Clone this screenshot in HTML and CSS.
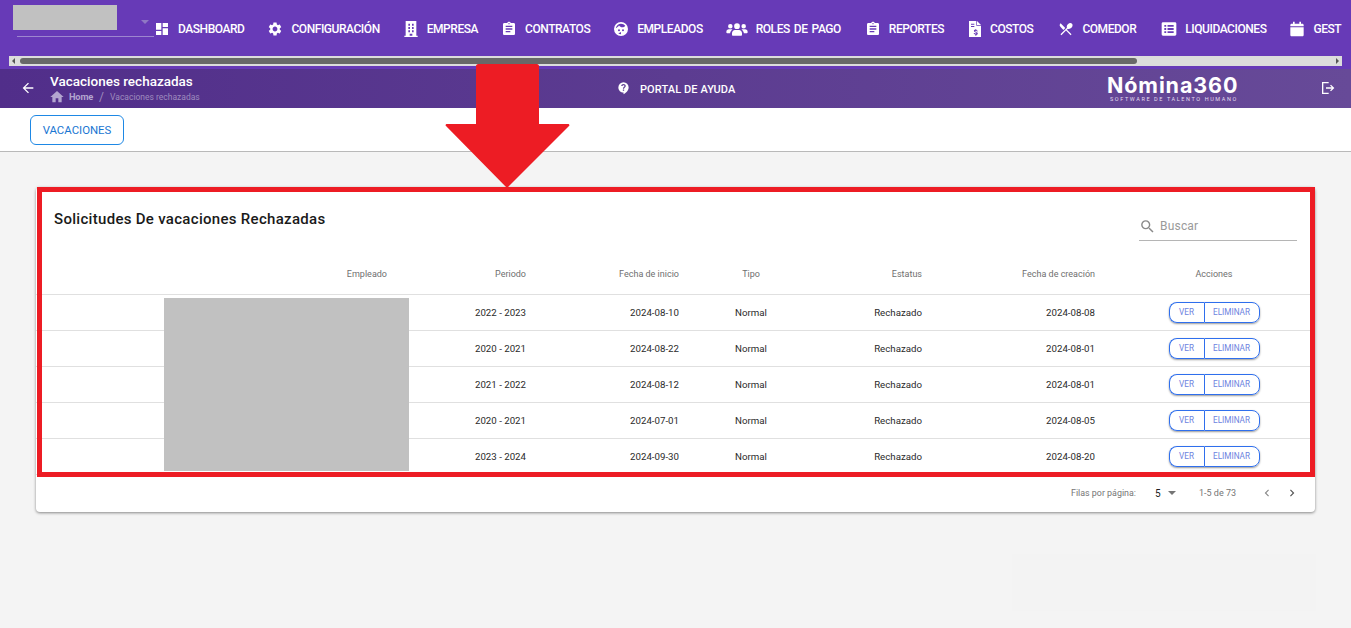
FILE: index.html
```html
<!DOCTYPE html>
<html lang="es">

<head>
  <meta charset="utf-8">
  <title>Vacaciones rechazadas</title>
  <link rel="stylesheet" href="styles.css">
</head>

<body>
  <header class="topbar">
    <div class="menu">
      <div class="company-select">
        <span class="select-arrow"></span>
      </div>
      <nav class="nav">
        <a class="nav-item"><svg class="nav-icon" viewBox="0 0 24 24"><path d="M3 13h8V3H3v10zm0 8h8v-6H3v6zm10 0h8V11h-8v10zm0-18v6h8V3h-8z"/></svg>DASHBOARD</a>
        <a class="nav-item"><svg class="nav-icon" viewBox="0 0 24 24"><path d="M19.14 12.94c.04-.3.06-.61.06-.94 0-.32-.02-.64-.07-.94l2.03-1.58c.18-.14.23-.41.12-.61l-1.92-3.32c-.12-.22-.37-.29-.59-.22l-2.39.96c-.5-.38-1.03-.7-1.62-.94l-.36-2.54c-.04-.24-.24-.41-.48-.41h-3.84c-.24 0-.43.17-.47.41l-.36 2.54c-.59.24-1.13.57-1.62.94l-2.39-.96c-.22-.08-.47 0-.59.22L2.74 8.87c-.12.21-.08.47.12.61l2.03 1.58c-.05.3-.09.63-.09.94s.02.64.07.94l-2.03 1.58c-.18.14-.23.41-.12.61l1.92 3.32c.12.22.37.29.59.22l2.39-.96c.5.38 1.03.7 1.62.94l.36 2.54c.05.24.24.41.48.41h3.84c.24 0 .44-.17.47-.41l.36-2.54c.59-.24 1.13-.56 1.62-.94l2.39.96c.22.08.47 0 .59-.22l1.92-3.32c.12-.22.07-.47-.12-.61l-2.01-1.58zM12 15.6c-1.98 0-3.6-1.62-3.6-3.6s1.62-3.6 3.6-3.6 3.6 1.62 3.6 3.6-1.62 3.6-3.6 3.6z"/></svg>CONFIGURACIÓN</a>
        <a class="nav-item"><svg class="nav-icon" viewBox="0 0 24 24"><path fill-rule="evenodd" d="M4 0h16v22h2v2H2v-2h2V0zm4 4v3h2.500V4H8zm5.500 0v3H16V4h-2.500zM8 9v3h2.500V9H8zm5.500 0v3H16V9h-2.500zM8 14v3h2.500v-3H8zm5.500 0v3H16v-3h-2.500zM10 19v3h4v-3h-4z"/></svg>EMPRESA</a>
        <a class="nav-item"><svg class="nav-icon" viewBox="0 0 24 24"><path d="M19 3h-4.18C14.4 1.84 13.3 1 12 1c-1.3 0-2.4.84-2.82 2H5c-1.1 0-2 .9-2 2v14c0 1.1.9 2 2 2h14c1.1 0 2-.9 2-2V5c0-1.1-.9-2-2-2zm-7 0c.55 0 1 .45 1 1s-.45 1-1 1-1-.45-1-1 .45-1 1-1zm2 14H7v-2h7v2zm3-4H7v-2h10v2zm0-4H7V7h10v2z"/></svg>CONTRATOS</a>
        <a class="nav-item"><svg class="nav-icon" viewBox="0 0 24 24"><path fill-rule="evenodd" d="M12 1.500a10.500 10.500 0 1 0 0 21 10.500 10.500 0 0 0 0-21zM12 4c2.600 0 4.900 1.300 6.400 3.200-1 1.500-2.700 2.300-4.400 2.300-2 0-3.800-1-5-2.700C7.600 8.800 6 10 4.200 10.700 5 7 8.100 4 12 4zM9 12.500a1.500 1.500 0 1 1 0 3 1.500 1.500 0 0 1 0-3zm6 0a1.500 1.500 0 1 1 0 3 1.500 1.500 0 0 1 0-3zM12 20c-1.500 0-3-.4-4.200-1.200l4.200-2.300V20z"/></svg>EMPLEADOS</a>
        <a class="nav-item"><svg class="nav-icon nav-icon-wide" viewBox="0 0 32 24"><path d="M16 3.500a4.300 4.300 0 1 1 0 8.600 4.300 4.300 0 0 1 0-8.600zM6 4.500a3.400 3.400 0 1 1 0 6.800 3.400 3.400 0 0 1 0-6.800zm20 0a3.400 3.400 0 1 1 0 6.800 3.400 3.400 0 0 1 0-6.800zM10 22c-.8 0-1.500-.6-1.500-1.500v-2c0-2.800 2-5 4.500-5h6c2.500 0 4.500 2.200 4.500 5v2c0 .9-.7 1.500-1.500 1.500H10zM0 16.500c0-2.500 1.700-4 3.800-4h3.400c.8 0 1.500.2 2 .7-2 1-3.400 2.900-3.500 5.300H2c-1 0-2-.8-2-1.800v-.2zm32 0c0-2.500-1.700-4-3.800-4h-3.400c-.8 0-1.500.2-2 .7 2 1 3.400 2.900 3.500 5.300H30c1 0 2-.8 2-1.800v-.2z"/></svg>ROLES DE PAGO</a>
        <a class="nav-item nav-item-near"><svg class="nav-icon" viewBox="0 0 24 24"><path d="M19 3h-4.18C14.4 1.84 13.3 1 12 1c-1.3 0-2.4.84-2.82 2H5c-1.1 0-2 .9-2 2v14c0 1.1.9 2 2 2h14c1.1 0 2-.9 2-2V5c0-1.1-.9-2-2-2zm-7 0c.55 0 1 .45 1 1s-.45 1-1 1-1-.45-1-1 .45-1 1-1zm2 14H7v-2h7v2zm3-4H7v-2h10v2zm0-4H7V7h10v2z"/></svg>REPORTES</a>
        <a class="nav-item nav-item-far"><svg class="nav-icon nav-icon-narrow" viewBox="0 0 18 24"><path fill-rule="evenodd" d="M0 0h11v7h7v17H0V0zm12 0 6 6h-6V0zM3 4v1.500h5V4H3zm0 3.500V9h5V7.500H3zm6.500 4v1.100c-1.300.2-2.200 1.100-2.200 2.200 0 1.400 1.200 1.900 2.500 2.300 1 .3 1.400.5 1.400 1 0 .4-.5.8-1.300.8-.9 0-1.300-.4-1.400-1H7c.1 1.200 1 2 2.500 2.200V22H11v-1c1.300-.2 2.200-1 2.200-2.200 0-1.500-1.200-2-2.600-2.400-1-.3-1.300-.5-1.300-.9s.4-.8 1.100-.8c.8 0 1.100.4 1.200.9h1.500c-.1-1.100-.8-1.900-2.100-2.100v-1H9.500z"/></svg>COSTOS</a>
        <a class="nav-item nav-item-far"><svg class="nav-icon" viewBox="0 0 24 24"><path d="M8.100 13.340l2.830-2.830L3.910 3.500a4 4 0 0 0 0 5.660l4.190 4.180zm6.780-1.810c1.530.71 3.680.21 5.270-1.380 1.910-1.910 2.280-4.650.81-6.120-1.460-1.460-4.200-1.100-6.120.81-1.590 1.590-2.090 3.740-1.380 5.270L3.700 19.870l1.410 1.410L12 14.410l6.880 6.880 1.410-1.410L13.410 13l1.470-1.470z"/></svg>COMEDOR</a>
        <a class="nav-item nav-item-far"><svg class="nav-icon" viewBox="0 0 24 24"><path fill-rule="evenodd" d="M3 2h18c1.100 0 2 .9 2 2v16c0 1.100-.9 2-2 2H3c-1.100 0-2-.9-2-2V4c0-1.100.9-2 2-2zm2 4v2.800h2.800V6H5zm4.800 0v2.800H19V6H9.800zM5 10.600v2.800h2.800v-2.800H5zm4.800 0v2.800H19v-2.800H9.800zM5 15.200V18h2.800v-2.800H5zm4.800 0V18H19v-2.800H9.800z"/></svg>LIQUIDACIONES</a>
        <a class="nav-item"><svg class="nav-icon" viewBox="0 0 24 24"><path d="M6 1h2.500v3h7V1H18v3h2c1.100 0 2 .9 2 2v2H2V6c0-1.100.9-2 2-2h2V1zM2 9.500h20V21c0 1.100-.9 2-2 2H4c-1.100 0-2-.9-2-2V9.500z"/></svg>GEST</a>
      </nav>
    </div>
    <div class="scrollbar">
      <span class="scroll-arrow scroll-left"></span>
      <span class="scroll-thumb"></span>
      <span class="scroll-arrow scroll-right"></span>
    </div>
  </header>

  <div class="subheader">
    <div class="page-title">
      <svg class="back-icon" viewBox="0 0 24 24"><path d="M20 11H7.830l5.590-5.590L12 4l-8 8 8 8 1.410-1.410L7.830 13H20v-2z"/></svg>
      <div>
        <h1 class="title">Vacaciones rechazadas</h1>
        <div class="crumbs">
          <svg class="home-icon" viewBox="0 0 24 24"><path d="M10 20v-6h4v6h5v-8h3L12 3 2 12h3v8z"/></svg>
          <b>Home</b><i>/</i><span>Vacaciones rechazadas</span>
        </div>
      </div>
    </div>
    <a class="help">
      <svg class="help-icon" viewBox="0 0 24 24"><path fill-rule="evenodd" d="M12 1.500a9.500 9.500 0 0 0-9.500 9.500c0 5.200 4.300 9.500 9.500 9.500v3c5-2.400 9.500-7.300 9.500-12.500A9.500 9.500 0 0 0 12 1.500zm-1.200 15.800v-2.400h2.400v2.400h-2.400zm2.300-4h-2.200c0-3.300 3-3.100 3-5 0-.9-.8-1.600-1.900-1.600s-1.900.7-1.900 1.700H7.800c0-2.300 1.900-3.800 4.200-3.800s4.200 1.500 4.200 3.700c0 2.600-3.100 2.900-3.100 5z"/></svg>
      PORTAL DE AYUDA
    </a>
    <div class="logo">
      <div class="logo-name">Nómina360</div>
      <div class="logo-tag">SOFTWARE DE TALENTO HUMANO</div>
    </div>
    <svg class="logout-icon" viewBox="0 0 24 24"><path d="M3 3h10v2H5v14h8v2H3V3zm13.500 4 5 5-5 5-1.400-1.400 2.600-2.600H9v-2h8.700l-2.600-2.600L16.500 7z"/></svg>
  </div>

  <div class="tabs">
    <button class="tab-button">VACACIONES</button>
  </div>

  <main class="content">
    <section class="card">
      <div class="card-head">
        <h2 class="card-title">Solicitudes De vacaciones Rechazadas</h2>
        <label class="search">
          <svg class="search-icon" viewBox="0 0 24 24"><path d="M15.500 14h-.79l-.28-.27A6.470 6.470 0 0 0 16 9.500 6.500 6.500 0 1 0 9.500 16c1.610 0 3.090-.59 4.230-1.570l.27.28v.79l5 4.990L20.490 19l-4.990-5zm-6 0C7.010 14 5 11.990 5 9.500S7.010 5 9.500 5 14 7.010 14 9.500 11.990 14 9.500 14z"/></svg>
          Buscar
        </label>
      </div>
      <table class="grid">
        <colgroup>
          <col class="col-empleado"><col class="col-periodo"><col class="col-inicio"><col class="col-tipo"><col class="col-estatus"><col class="col-creacion"><col class="col-acciones">
        </colgroup>
        <thead>
          <tr>
            <th>Empleado</th><th>Periodo</th><th>Fecha de inicio</th><th class="center">Tipo</th><th>Estatus</th><th>Fecha de creación</th><th class="center last">Acciones</th>
          </tr>
        </thead>
        <tbody>
          <tr>
            <td></td><td>2022 - 2023</td><td>2024-08-10</td><td class="center">Normal</td><td>Rechazado</td><td>2024-08-08</td>
            <td class="center last"><span class="actions"><button class="act act-ver">VER</button><button class="act">ELIMINAR</button></span></td>
          </tr>
          <tr>
            <td></td><td>2020 - 2021</td><td>2024-08-22</td><td class="center">Normal</td><td>Rechazado</td><td>2024-08-01</td>
            <td class="center last"><span class="actions"><button class="act act-ver">VER</button><button class="act">ELIMINAR</button></span></td>
          </tr>
          <tr>
            <td></td><td>2021 - 2022</td><td>2024-08-12</td><td class="center">Normal</td><td>Rechazado</td><td>2024-08-01</td>
            <td class="center last"><span class="actions"><button class="act act-ver">VER</button><button class="act">ELIMINAR</button></span></td>
          </tr>
          <tr>
            <td></td><td>2020 - 2021</td><td>2024-07-01</td><td class="center">Normal</td><td>Rechazado</td><td>2024-08-05</td>
            <td class="center last"><span class="actions"><button class="act act-ver">VER</button><button class="act">ELIMINAR</button></span></td>
          </tr>
          <tr>
            <td></td><td>2023 - 2024</td><td>2024-09-30</td><td class="center">Normal</td><td>Rechazado</td><td>2024-08-20</td>
            <td class="center last"><span class="actions"><button class="act act-ver">VER</button><button class="act">ELIMINAR</button></span></td>
          </tr>
        </tbody>
      </table>
      <div class="pager">
        <span class="pager-label">Filas por página:</span>
        <span class="pager-size">5</span>
        <span class="pager-caret"></span>
        <span class="pager-range">1-5 de 73</span>
        <svg class="pager-prev" viewBox="0 0 24 24"><path d="M15.410 7.410 14 6l-6 6 6 6 1.410-1.410L10.830 12z"/></svg>
        <svg class="pager-next" viewBox="0 0 24 24"><path d="M10 6 8.590 7.410 13.170 12l-4.580 4.590L10 18l6-6z"/></svg>
      </div>
    </section>
  </main>

  <!-- tapes and marks laid over the screenshot -->
  <div class="redact redact-company"></div>
  <div class="redact redact-names"></div>
  <div class="red-frame"></div>
  <svg class="red-arrow" viewBox="0 0 125 124"><path d="M33 0h59c1 0 2 1 2 2v58h29c1 0 2 1 1 2L62 124 1 62c-1-1 0-2 1-2h29V2c0-1 1-2 2-2z"/></svg>
  <div class="faint-patch"></div>
</body>

</html>
```

FILE: styles.css
```css
* {
  box-sizing: border-box;
}

body {
  margin: 0;
  height: 100vh;
  overflow: hidden;
  display: flex;
  flex-direction: column;
  background: #f4f4f4;
  font-family: Roboto, "Liberation Sans", sans-serif;
  color: #212121;
}

/* top menu */
.topbar {
  height: 69px;
  flex: none;
  background: #673ab7;
  overflow: hidden;
}

.menu {
  height: 56px;
  display: flex;
  align-items: flex-start;
}

.company-select {
  flex: none;
  width: 137px;
  height: 37px;
  margin-left: 17px;
  border-bottom: 1px solid #9d86cf;
  position: relative;
}

.select-arrow {
  position: absolute;
  top: 20px;
  right: 5px;
  border-left: 4.500px solid transparent;
  border-right: 4.500px solid transparent;
  border-top: 4.500px solid #8f78c4;
}

.nav {
  display: flex;
  gap: 23px;
  padding-top: 20px;
  white-space: nowrap;
}

.nav-item {
  display: flex;
  align-items: center;
  gap: 8px;
  height: 18px;
  color: #fff;
  font-size: 12px;
  font-weight: 500;
  letter-spacing: -0.45px;
  word-spacing: 1.500px;
}

.nav-item-far {
  margin-left: 2px;
}

.nav-item-near {
  margin-left: 1px;
}

.nav-icon {
  width: 16px;
  height: 16px;
  fill: #fff;
  flex: none;
}

.nav-icon-wide {
  width: 22px;
}

.nav-icon-narrow {
  width: 12px;
  margin-right: 1px;
}

.scrollbar {
  height: 10px;
  margin: 0 9px;
  background: #dcdcdc;
  display: flex;
  align-items: center;
  position: relative;
}

.scroll-thumb {
  position: absolute;
  left: 11px;
  width: 1117px;
  height: 6px;
  border-radius: 3px;
  background: #686868;
}

.scroll-arrow {
  position: absolute;
  border-top: 3px solid transparent;
  border-bottom: 3px solid transparent;
}

.scroll-left {
  left: 3px;
  border-right: 3px solid #555;
}

.scroll-right {
  right: 3px;
  border-left: 3px solid #555;
}

/* page header */
.subheader {
  height: 39px;
  flex: none;
  display: flex;
  align-items: center;
  color: #fff;
  background: linear-gradient(90deg, #512e8a, #674a98);
  position: relative;
}

.page-title {
  width: 617px;
  display: flex;
  align-items: center;
  flex: none;
  padding-bottom: 1px;
}

.back-icon {
  width: 16px;
  height: 16px;
  fill: #fff;
  margin-left: 20px;
  margin-right: 14px;
  flex: none;
}

.title {
  margin: 0;
  font-size: 13.500px;
  line-height: 17px;
  font-weight: 500;
}

.crumbs {
  display: flex;
  align-items: center;
  height: 13px;
  font-size: 8.500px;
  color: #9e8bbe;
}

.crumbs b {
  font-size: 9.300px;
  font-weight: 700;
  color: #b3a5cf;
  margin-left: 4px;
  letter-spacing: -0.2px;
}

.crumbs i {
  font-style: normal;
  font-size: 12px;
  margin: 0 6px;
}

.home-icon {
  width: 16px;
  height: 16px;
  margin-left: -1px;
  fill: #b3a5cf;
}

.help {
  width: 490px;
  flex: none;
  display: flex;
  align-items: center;
  gap: 10px;
  font-size: 11px;
  font-weight: 500;
  letter-spacing: 0.1px;
  padding-top: 1px;
}

.help-icon {
  width: 13px;
  height: 14px;
  fill: #fff;
  margin-top: -3px;
}

.logo {
  width: 213px;
  flex: none;
}

.logo-name {
  font-family: Inter, "Open Sans", sans-serif;
  font-size: 21.500px;
  line-height: 21px;
  font-weight: 700;
  letter-spacing: 0.9px;
}

.logo-tag {
  font-size: 5.500px;
  line-height: 7px;
  letter-spacing: 1.600px;
  padding-left: 3px;
  color: #e2dcee;
}

.logout-icon {
  width: 16px;
  height: 16px;
  fill: #fff;
  flex: none;
  margin-top: -2px;
}

/* tab row */
.tabs {
  height: 44px;
  flex: none;
  background: #fff;
  border-bottom: 1px solid #b9b9b9;
  padding: 7px 0 0 30px;
}

.tab-button {
  width: 94px;
  height: 30px;
  border: 1px solid #1e88e5;
  border-radius: 6px;
  background: #fff;
  color: #1976d2;
  font-family: inherit;
  font-size: 11.400px;
  padding: 0;
}

/* card */
.content {
  flex: 1;
  padding: 35px 36px 0 36px;
}

.card {
  background: #fff;
  border-radius: 4px;
  box-shadow: 0 1px 3px rgba(0, 0, 0, 0.45);
}

.card-head {
  height: 67px;
  display: flex;
  justify-content: space-between;
  padding: 21px 18px 0 18px;
}

.card-title {
  margin: 0;
  font-size: 15px;
  line-height: 22px;
  font-weight: 500;
  letter-spacing: 0.3px;
  color: #1a1a1a;
}

.search {
  width: 158px;
  height: 33px;
  padding-top: 4px;
  border-bottom: 1px solid #b5b5b5;
  display: flex;
  align-items: center;
  gap: 4px;
  font-size: 12px;
  color: #9a9a9a;
  letter-spacing: 0.2px;
}

.search-icon {
  width: 17px;
  height: 17px;
  fill: #8a8a8a;
}

.grid {
  width: 100%;
  table-layout: fixed;
  border-collapse: collapse;
}

.col-empleado { width: 367px; }
.col-periodo { width: 139px; }
.col-inicio { width: 153px; }
.col-tipo { width: 112px; }
.col-estatus { width: 131px; }
.col-creacion { width: 173px; }
.col-acciones { width: 204px; }

.grid th,
.grid td {
  padding: 0 16px;
  text-align: right;
  border-bottom: 1px solid #e0e0e0;
}

.grid th {
  height: 40px;
  font-size: 9px;
  font-weight: 400;
  color: #6f6f6f;
}

.grid td {
  height: 36px;
  font-size: 9.700px;
  color: #2a2a2a;
}

.grid .center {
  text-align: center;
}

.grid .last {
  padding-left: 18px;
}

.actions {
  display: inline-flex;
  vertical-align: middle;
  border-radius: 8px;
  box-shadow: 0 1px 2px rgba(0, 0, 0, 0.4);
}

.act {
  height: 21px;
  width: 56px;
  border: 1px solid #2f6fed;
  border-radius: 0 8px 8px 0;
  background: #fff;
  color: #6d83e0;
  font-family: inherit;
  font-size: 8.200px;
  padding: 0;
}

.act-ver {
  width: 35px;
  border-right: 0;
  border-radius: 8px 0 0 8px;
}

.pager {
  height: 37px;
  display: flex;
  align-items: center;
  font-size: 8.900px;
  color: #757575;
  padding-left: 1035px;
}

.pager-label {
  width: 84px;
}

.pager-size {
  width: 13px;
  font-size: 10px;
  color: #212121;
}

.pager-caret {
  width: 31px;
  height: 0;
  position: relative;
}

.pager-caret::before {
  content: "";
  position: absolute;
  left: 0;
  top: -2px;
  border-left: 4.500px solid transparent;
  border-right: 4.500px solid transparent;
  border-top: 4.500px solid #757575;
}

.pager-range {
  width: 61px;
  font-size: 9px;
}

.pager-prev,
.pager-next {
  width: 14px;
  height: 14px;
  flex: none;
  fill: #8a8a8a;
}

.pager-next {
  margin-left: 11px;
  fill: #555;
}

/* overlays */
.redact {
  position: absolute;
  background: #c1c1c1;
}

.redact-company {
  left: 13px;
  top: 5px;
  width: 104px;
  height: 25px;
}

.redact-names {
  left: 164px;
  top: 298px;
  width: 245px;
  height: 173px;
}

.red-frame {
  position: absolute;
  left: 37px;
  top: 187px;
  width: 1278px;
  height: 290px;
  border: 5px solid #ed1c24;
}

.red-arrow {
  position: absolute;
  left: 445px;
  top: 64px;
  width: 125px;
  height: 124px;
  fill: #ed1c24;
}

.faint-patch {
  position: absolute;
  left: 1012px;
  top: 554px;
  width: 304px;
  height: 57px;
  background: #f3f3f3;
}
```
